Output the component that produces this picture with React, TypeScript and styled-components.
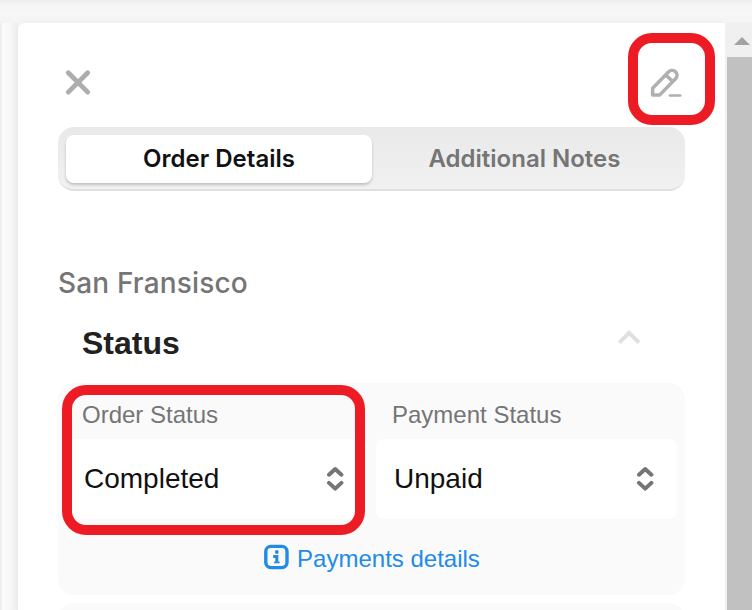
import React from "react";
import styled, { createGlobalStyle } from "styled-components";

const GlobalStyle = createGlobalStyle`
  * { box-sizing: border-box; }
  body { margin: 0; background: #f7f7f7; overflow: hidden; }
  svg { display: block; fill: none; flex: none; }
`;

const Page = styled.main`
  position: relative;
  width: 752px;
  height: 610px;
  overflow: hidden;
  display: grid;
  grid-template-columns: 2px 16px 707px 27px;
  grid-template-rows: 23px 587px;
  font-family: "Liberation Sans", Arial, sans-serif;
`;

const TopShade = styled.div`
  grid-column: 1 / -1;
  background: linear-gradient(#ededed, #f5f5f5 5px, #f7f7f7 16px, #f3f3f3);
`;

const PreviousColumn = styled.div`
  background: #eeeeee;
  border-top-right-radius: 2px;
`;

const Gutter = styled.div`
  background: linear-gradient(90deg, #fbfbfb, #f8f8f8 45%, #ededed);
`;

const Panel = styled.section`
  background: #fff;
  border-top-left-radius: 8px;
  padding: 44px 40px 0;
  box-shadow: 0 0 8px rgba(0, 0, 0, 0.025);
`;

const Header = styled.header`
  display: flex;
  justify-content: space-between;
  height: 60px;
`;

const IconButton = styled.button`
  width: 40px;
  height: 32px;
  padding: 0;
  border: 0;
  background: none;
`;

const Tabs = styled.nav`
  display: flex;
  height: 64px;
  padding: 8px;
  border-radius: 16px;
  border-bottom: 2px solid #dce0e3;
  background: linear-gradient(#e9e9e9, #f1f1f1);
`;

const Tab = styled.button<{ $active?: boolean }>`
  width: ${(p) => (p.$active ? 306 : 305)}px;
  height: 48px;
  padding: 0;
  border: 0;
  border-radius: 8px;
  font: 600 24px/48px Inter, sans-serif;
  color: ${(p) => (p.$active ? "#111" : "#757575")};
  background: ${(p) => (p.$active ? "#fff" : "transparent")};
  box-shadow: ${(p) => (p.$active ? "0 2px 3px rgba(0, 0, 0, 0.2)" : "none")};
`;

const Location = styled.h2`
  margin: 74px 0 0;
  font: 500 28px/36px Inter, sans-serif;
  letter-spacing: 0.15px;
  color: #757575;
`;

const SectionHead = styled.div`
  display: flex;
  justify-content: space-between;
  align-items: flex-start;
  height: 82px;
  padding: 22px 44px 0 24px;
`;

const SectionTitle = styled.h3`
  margin: 0;
  font-size: 32px;
  line-height: 40px;
  font-weight: 700;
  color: #212121;
`;

const Card = styled.div`
  height: 212px;
  margin-bottom: 8px;
  padding: 8px;
  border-radius: 16px;
  background: #fafafa;
`;

const Fields = styled.div`
  display: grid;
  grid-template-columns: 301px 301px;
  column-gap: 9px;
`;

const FieldLabel = styled.div`
  height: 48px;
  padding-left: 16px;
  font-size: 24px;
  line-height: 48px;
  color: #757575;
`;

const Select = styled.button`
  display: flex;
  width: 100%;
  height: 80px;
  align-items: center;
  justify-content: space-between;
  padding: 0 23px 0 18px;
  border: 0;
  border-radius: 8px;
  background: #fff;
  font: 28px "Liberation Sans", Arial, sans-serif;
  color: #111;
`;

const DetailsLink = styled.a`
  display: flex;
  align-items: center;
  justify-content: center;
  gap: 8px;
  height: 40px;
  margin-top: 20px;
  padding-left: 1px;
  font-size: 24px;
  line-height: 40px;
  color: #228be6;
`;

const Scrollbar = styled.aside`
  display: flex;
  flex-direction: column;
  padding-left: 2px;
  background: #f0f0f0;
`;

const ScrollUp = styled.div`
  height: 34px;
  padding: 13px 0 0 6px;
`;

const Thumb = styled.div`
  flex: 1;
  background: #c1c1c1;
`;

const Marker = styled.div<{ $x: number; $y: number; $w: number; $h: number }>`
  position: absolute;
  left: ${(p) => p.$x}px;
  top: ${(p) => p.$y}px;
  width: ${(p) => p.$w}px;
  height: ${(p) => p.$h}px;
  border: 10px solid #ed1c24;
  border-radius: 24px;
  pointer-events: none;
`;

const CloseIcon = () => (
  <svg width="40" height="32" stroke="#adadad" strokeWidth="4.8" strokeLinecap="round">
    <path d="M10.3 5.7L29.7 25.1M29.7 5.7L10.3 25.1" />
  </svg>
);

const EditIcon = () => (
  <svg width="40" height="32" stroke="#b0b0b0" strokeWidth="3.5" strokeLinejoin="round" strokeLinecap="round">
    <path d="M7.6 28.1V21.2L23.2 5.3A4.9 4.9 0 0 1 31 11.3L14.6 28.1ZM21 8.2L27.8 14.6" />
    <path d="M25 28.5H35.2" strokeWidth="2.7" />
  </svg>
);

const CollapseIcon = () => (
  <svg width="24" height="32" stroke="#e0e0e0" strokeWidth="4">
    <path d="M2.3 19.6L12.1 9.8L21.9 19.6" />
  </svg>
);

const SortIcon = () => (
  <svg width="18" height="26" stroke="#757575" strokeWidth="4" strokeLinecap="round" strokeLinejoin="round">
    <path d="M3 8.7L9.2 3L15.4 8.7M3 16.9L9.2 22.6L15.4 16.9" />
  </svg>
);

const InfoIcon = () => (
  <svg width="25" height="30" stroke="#228be6" strokeWidth="3.4">
    <rect x="1.8" y="2.4" width="21.2" height="21.2" rx="5" />
    <path d="M9.2 12.4H12.8V18.9" strokeWidth="3" />
    <path d="M10.2 18.4H15.6" strokeWidth="1.8" />
    <circle cx="12.8" cy="8" r="1.9" fill="#228be6" stroke="none" />
  </svg>
);

const StatusField = ({ label, value }: { label: string; value: string }) => (
  <div>
    <FieldLabel>{label}</FieldLabel>
    <Select>
      {value}
      <SortIcon />
    </Select>
  </div>
);

export default function App() {
  return (
    <>
      <GlobalStyle />
      <Page>
        <TopShade />
        <PreviousColumn />
        <Gutter />
        <Panel>
          <Header>
            <IconButton aria-label="Close"><CloseIcon /></IconButton>
            <IconButton aria-label="Edit order"><EditIcon /></IconButton>
          </Header>
          <Tabs>
            <Tab $active>Order Details</Tab>
            <Tab>Additional Notes</Tab>
          </Tabs>
          <Location>San Fransisco</Location>
          <SectionHead>
            <SectionTitle>Status</SectionTitle>
            <CollapseIcon />
          </SectionHead>
          <Card>
            <Fields>
              <StatusField label="Order Status" value="Completed" />
              <StatusField label="Payment Status" value="Unpaid" />
            </Fields>
            <DetailsLink><InfoIcon />Payments details</DetailsLink>
          </Card>
          <Card />
        </Panel>
        <Scrollbar>
          <ScrollUp>
            <svg width="18" height="10"><path d="M1 9L9 1L17 9Z" fill="#a3a3a3" /></svg>
          </ScrollUp>
          <Thumb />
        </Scrollbar>
        <Marker $x={628} $y={33} $w={87} $h={92} />
        <Marker $x={62} $y={385} $w={303} $h={150} />
      </Page>
    </>
  );
}
